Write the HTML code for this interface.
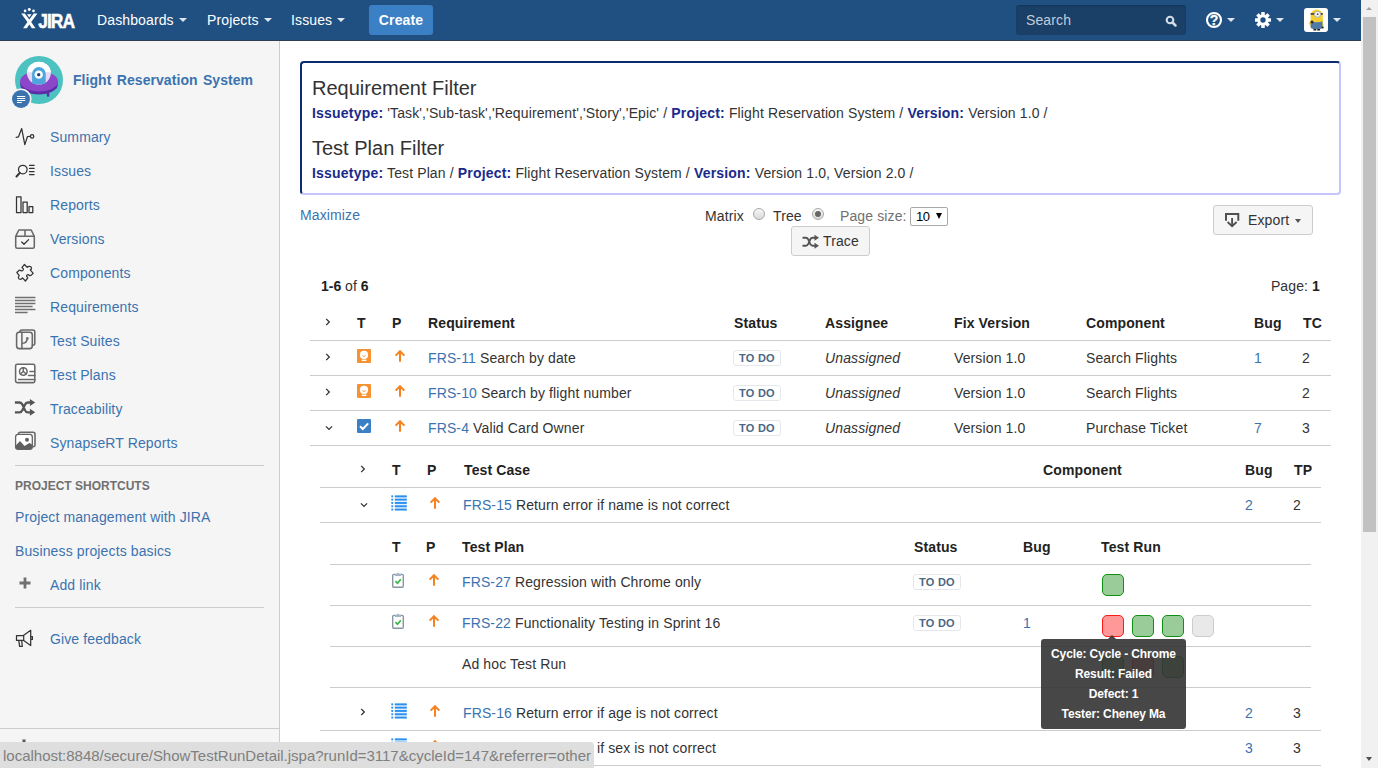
<!DOCTYPE html>
<html lang="en">
<head>
<meta charset="utf-8">
<title>Traceability - Flight Reservation System - JIRA</title>
<style>
*{box-sizing:border-box;margin:0;padding:0}
html,body{width:1378px;height:768px;overflow:hidden;background:#fff}
body{font-family:"Liberation Sans",Arial,sans-serif;font-size:14px;color:#333;line-height:20px;position:relative;letter-spacing:0.12px}
a{color:#3b73af;text-decoration:none}
.abs{position:absolute}
/* header */
#header{position:absolute;left:0;top:0;width:1361px;height:41px;background:#205081;border-bottom:1px solid #2e3d54}
#header .nav{position:absolute;top:0;height:40px;line-height:40px;color:#fff;font-size:14px;white-space:nowrap}
#header .caret{display:inline-block;width:0;height:0;border-left:4px solid transparent;border-right:4px solid transparent;border-top:4px solid #dfe6ee;vertical-align:middle;margin-left:5px;position:relative;top:-1px}
#header .hc{position:absolute;top:18px;width:0;height:0;border-left:4px solid transparent;border-right:4px solid transparent;border-top:4px solid #dfe6ee}
#create{position:absolute;left:369px;top:5px;width:64px;height:30px;border-radius:3px;background:#3b7fc4;color:#fff;font-weight:bold;font-size:14px;line-height:30px;text-align:center}
#search{position:absolute;left:1016px;top:5px;width:170px;height:30px;border-radius:3px;background:#1a4068;color:#c0cddb;font-size:14px;line-height:31px;padding-left:10px;box-shadow:inset 0 1px 2px rgba(0,0,0,.18)}
/* sidebar */
#sidebar{position:absolute;left:0;top:41px;width:280px;height:727px;background:#f5f5f5;border-right:1px solid #ccc}
#sidebar .item{position:absolute;left:50px;height:20px;line-height:20px;font-size:14px;color:#3b73af;white-space:nowrap}
#sidebar .ico{position:absolute;left:13px;width:24px;height:24px}
#sidebar .hr{position:absolute;left:15px;width:249px;height:1px;background:#ccc}
/* scrollbar */
#sb{position:absolute;left:1361px;top:0;width:17px;height:768px;background:#f1f1f1}
#sb .thumb{position:absolute;left:2px;top:17px;width:13px;height:515px;background:#c1c1c1}
#sb .up{position:absolute;left:5px;top:7px;width:0;height:0;border-left:3.5px solid transparent;border-right:3.5px solid transparent;border-bottom:3.5px solid #a3a3a3}
#sb .down{position:absolute;left:5px;top:757px;width:0;height:0;border-left:3.5px solid transparent;border-right:3.5px solid transparent;border-top:4px solid #505050}
/* content */
#filter{position:absolute;left:300px;top:61px;width:1041px;height:134px;border:2px solid;border-color:#0b2b70 #c5c5fb #c5c5fb #0b2b70;border-radius:4px}
#filter h2{letter-spacing:0;position:absolute;left:10px;font-size:20px;font-weight:normal;line-height:24px;color:#333;white-space:nowrap}
#filter p{position:absolute;left:10px;font-size:14px;line-height:20px;white-space:nowrap;color:#333}
#filter b{color:#1a2a8c;letter-spacing:0.2px}
.btn{position:absolute;border:1px solid #ccc;border-radius:3px;background:#f5f5f5;color:#333;font-size:14px;white-space:nowrap}
.t{position:absolute;white-space:nowrap;line-height:20px;height:20px}
.b{font-weight:bold;color:#222}
.line{position:absolute;height:1px;background:#ccc}
.lz{display:inline-block;position:relative;top:-1px;left:-1px;border:1px solid #e4e8ed;border-radius:3px;background:#fff;color:#4a6785;font-size:11px;font-weight:bold;line-height:14px;padding:0 5px 0 5px;letter-spacing:0.25px;height:16px}
.run{position:absolute;width:22px;height:22px;border-radius:5px;border:1px solid}
.g{background:#99cc99;border-color:#0f8f14}
.r{background:#ff9999;border-color:#ff1a1a}
.n{background:#e9e9e9;border-color:#ccc}
#tip{position:absolute;left:1041px;top:639px;width:145px;height:90px;border-radius:3px;background:rgba(51,51,51,.9);color:#fff;font-size:12px;font-weight:bold;text-align:center;line-height:20px;padding-top:5px;letter-spacing:-0.12px}
#tip:before{content:"";position:absolute;left:67px;top:-4px;border-left:4.5px solid transparent;border-right:4.5px solid transparent;border-bottom:4px solid rgba(51,51,51,.9)}
#main{position:absolute;left:0;top:0;width:1378px;height:768px}
.radio{position:absolute;width:12px;height:12px;border-radius:50%;border:1px solid #a8a8a8;background:linear-gradient(#f6f6f6,#dadada)}
.radio.on:after{content:"";position:absolute;left:2px;top:2px;width:6px;height:6px;border-radius:50%;background:#666}
.sel{position:absolute;width:38px;height:19px;border:1px solid #a9a9a9;border-radius:2px;background:#fff;font-size:13px;line-height:17px;padding-left:5px;color:#000;letter-spacing:-0.5px}
.sel i{position:absolute;right:5px;top:5px;border-left:3.5px solid transparent;border-right:3.5px solid transparent;border-top:6px solid #000}
.dcaret{position:absolute;width:0;height:0;border-left:3.5px solid transparent;border-right:3.5px solid transparent;border-top:4px solid #555}
#status{position:absolute;left:0;top:742px;width:594px;height:26px;background:#dedede;border-top-right-radius:4px;color:#808080;font-size:15px;line-height:26px;padding:1px 0 0 3px;white-space:nowrap;font-family:"Liberation Sans",sans-serif;letter-spacing:-0.01px}
</style>
</head>
<body>

<div id="header">
  <div class="nav" style="left:97px">Dashboards<span class="caret"></span></div>
  <div class="nav" style="left:207px">Projects<span class="caret"></span></div>
  <div class="nav" style="left:291px">Issues<span class="caret"></span></div>
  <div id="create">Create</div>
  <div id="search">Search</div>

  <svg class="abs" style="left:20px;top:6px" width="58" height="26" viewBox="0 0 58 26">
    <circle cx="5.1" cy="4.9" r="1.35" fill="#fff"/><circle cx="9.3" cy="3.5" r="1.45" fill="#fff"/><circle cx="13.5" cy="4.9" r="1.35" fill="#fff"/>
    <path d="M1.2 7.4h3.6l4.5 6.2 4.5-6.2h3.6L11.2 16l4.3 6.2h-3.7l-2.5-3.7-2.5 3.7H3.1L7.4 16z" fill="#fff"/>
    <path d="M7 8.3h4.6L9.3 11.6z" fill="#fff"/>
    <text x="0" y="22.1" transform="translate(18.2 0) scale(0.87 1)" font-family="Liberation Sans, Arial, sans-serif" font-weight="bold" font-size="20" fill="#fff" stroke="#fff" stroke-width="0.5" letter-spacing="-1.1">JIRA</text>
  </svg>
  <svg class="abs" style="left:1165px;top:15px" width="13" height="13" viewBox="0 0 13 13"><circle cx="5" cy="5" r="3.3" fill="none" stroke="#d3dce6" stroke-width="2.1"/><path d="M7.5 7.5l3 3" stroke="#d3dce6" stroke-width="2.5" stroke-linecap="round"/></svg>
  <svg class="abs" style="left:1205px;top:11px" width="18" height="18" viewBox="0 0 18 18"><circle cx="9" cy="9" r="7" fill="none" stroke="#fff" stroke-width="2.100"/><text x="9" y="13.9" text-anchor="middle" font-family="Liberation Sans, Arial, sans-serif" font-weight="bold" font-size="14" fill="#fff" stroke="#fff" stroke-width="0.300">?</text></svg>
  <i class="hc" style="left:1227.300px"></i>
  <svg class="abs" style="left:1254px;top:11px" width="18" height="18" viewBox="-9.700 -9.700 19.400 19.400"><g fill="#fff"><circle r="6.1"/><rect x="-1.9" y="-8.6" width="3.8" height="17.2" rx="0.6"/><rect x="-1.9" y="-8.6" width="3.8" height="17.2" rx="0.6" transform="rotate(45)"/><rect x="-1.9" y="-8.6" width="3.8" height="17.2" rx="0.6" transform="rotate(90)"/><rect x="-1.9" y="-8.6" width="3.8" height="17.2" rx="0.6" transform="rotate(135)"/></g><circle r="2.9" fill="#205081"/></svg>
  <i class="hc" style="left:1276.300px"></i>
  <svg class="abs" style="left:1304px;top:8px" width="24" height="24" viewBox="0 0 24 24"><rect width="24" height="24" rx="3" fill="#fff"/><path d="M6.600 7.500a6.100 6.100 0 0 1 12.200 0V18a3 3 0 0 1-3 3h-6.200a3 3 0 0 1-3-3z" fill="#f6cf2f"/><path d="M6.500 13.400q6.200 1.500 12.200 0V18a3 3 0 0 1-3 3H9.500a3 3 0 0 1-3-3z" fill="#5079a5"/><path d="M7 12.600l-2.300 2.800 1.200 1.600 1.500-1.300zM18.400 13l1.200 4.500-1 .3z" fill="#f2c62a"/><circle cx="8" cy="14" r="1.500" fill="#2a2a2a"/><circle cx="18.700" cy="19.500" r="1.100" fill="#2a2a2a"/><rect x="6.600" y="5.200" width="12.200" height="1.500" fill="#333"/><circle cx="13.500" cy="6.300" r="3.400" fill="#b5b8bc"/><circle cx="13.500" cy="6.300" r="2.400" fill="#fff"/><circle cx="13.600" cy="6.200" r="0.900" fill="#6b2f2a"/><path d="M9.700 21h2.600v1.600H9.300zM13.200 21h2.600l.4 1.600h-3z" fill="#1d1d1d"/></svg>
  <i class="hc" style="left:1333px"></i>
</div>

<div id="sidebar">

  <!-- project avatar -->
  <svg class="abs" style="left:8px;top:9px" width="64" height="64" viewBox="0 0 64 64">
    <circle cx="31" cy="30" r="24" fill="#4cc3c1"/>
    <ellipse cx="31" cy="34.400" rx="18.800" ry="10.100" fill="#5a2ea6"/>
    <rect x="38.800" y="41" width="2.500" height="5.700" rx="1" fill="#5a2ea6"/>
    <ellipse cx="31" cy="31.300" rx="19" ry="10.100" fill="#8b46c9"/>
    <ellipse cx="30.900" cy="23.100" rx="12" ry="11.400" fill="#e6d9f5"/>
    <path d="M18.930 22.300A12 11.400 0 0 1 42.870 22.300z" fill="#fff"/>
    <path d="M24.100 33.600V23.700a6.800 6.800 0 0 1 13.600 0v9.900q-6.800 2-13.600 0z" fill="#4ea6dc"/>
    <circle cx="30.700" cy="24.650" r="4.200" fill="#fff"/><circle cx="30.700" cy="24.650" r="1.700" fill="#1d3f7a"/>
    <circle cx="13" cy="49" r="10.600" fill="#f5f5f5"/><circle cx="13" cy="49" r="9" fill="#3b73af"/>
    <path d="M9 46.500h8.200M9 48.500h8.200M9 50.500h8.200M9 52.500h4.800" stroke="#fff" stroke-width="1.100"/>
  </svg>
  <!-- summary -->
  <svg class="ico" style="top:84px" viewBox="0 0 24 24"><path d="M3.200 12.300l2.300-.5L8.700 3.600l3.100 16 2.700-8.100 2.600-.1" fill="none" stroke="#333" stroke-width="1.25" stroke-linejoin="round" stroke-linecap="round"/><circle cx="19.100" cy="11.400" r="1.700" fill="none" stroke="#333" stroke-width="1.25" stroke-linejoin="round" stroke-linecap="round"/></svg>
  <!-- issues -->
  <svg class="ico" style="top:118px" viewBox="0 0 24 24"><circle cx="9.800" cy="10.600" r="4.300" fill="none" stroke="#333" stroke-width="1.25" stroke-linejoin="round" stroke-linecap="round"/><path d="M6.800 13.900l-3.300 3.600" fill="none" stroke="#333" stroke-width="2" stroke-linecap="round"/><path d="M16.500 6.400h4.600M16.500 9.400h4.600M16.500 12.500h4.600M16.500 15.500h4.600" fill="none" stroke="#333" stroke-width="1.25" stroke-linejoin="round" stroke-linecap="round"/></svg>
  <!-- reports -->
  <svg class="ico" style="top:152px" viewBox="0 0 24 24"><rect x="3.500" y="3.800" width="4.500" height="15.700" fill="none" stroke="#333" stroke-width="1.25" stroke-linejoin="round" stroke-linecap="round"/><rect x="10" y="9" width="4.200" height="10.500" fill="none" stroke="#333" stroke-width="1.25" stroke-linejoin="round" stroke-linecap="round"/><rect x="16" y="13.600" width="3.800" height="5.900" fill="none" stroke="#333" stroke-width="1.25" stroke-linejoin="round" stroke-linecap="round"/></svg>
  <!-- versions -->
  <svg class="ico" style="top:186px" viewBox="0 0 24 24"><path d="M2.700 9.300L5.800 3h12.400l3.100 6.300v10.400a1.500 1.500 0 0 1-1.500 1.500H4.200a1.500 1.500 0 0 1-1.500-1.500zM2.700 9.300h18.600M12 3v6.300" fill="none" stroke="#686868" stroke-width="1.55" stroke-linejoin="round" stroke-linecap="round"/><path d="M8.700 15l2.300 2.300 4.600-4.700" fill="none" stroke="#333" stroke-width="1.25" stroke-linejoin="round" stroke-linecap="round"/></svg>
  <!-- components -->
  <svg class="abs" style="left:10px;top:217px" width="30" height="30" viewBox="0 0 30 30"><path d="M14.450 6.450L17.200 9.400Q18 8.300 19.500 8.400Q21.200 8.500 21.500 10Q21.700 11.200 20.300 11.900L23.200 15.400L21.100 17.200Q20.500 18 19.500 17.600Q18.500 16.200 17.300 16.800Q16.200 17.600 16.700 18.600Q17.600 19.300 17.800 19.900L15.400 23L12.500 19.900Q11.600 21.400 10.200 21.300Q8.600 21.300 8.400 20Q8.200 18.700 9.200 17.600L6.800 14.450L9.200 12.300Q10 11.800 11 12.700Q12.200 13.200 13.100 12.100Q13.800 11 12.900 10.200Q11.800 9.700 12.100 9.300z" fill="none" stroke="#333" stroke-width="1.25" stroke-linejoin="round" stroke-linecap="round"/></svg>
  <!-- requirements -->
  <svg class="abs" style="left:10px;top:251px" width="30" height="24" viewBox="0 0 30 24"><path d="M5 5.500h20.400M5 8.500h20.400M5 11.500h20.400M5 14.500h17.600M5 17.500h20.400M5 20.500h12.600" fill="none" stroke="#707070" stroke-width="1.450"/></svg>
  <!-- test suites -->
  <svg class="abs" style="left:10px;top:283px" width="30" height="30" viewBox="0 0 30 30"><path d="M9.800 8.200V8a2 2 0 0 1 2-2h11a2 2 0 0 1 2 2v11.300a2 2 0 0 1-2 2h-.5" fill="none" stroke="#686868" stroke-width="1.55" stroke-linejoin="round" stroke-linecap="round"/><rect x="6.600" y="8.200" width="15.700" height="16.400" rx="2.600" fill="none" stroke="#686868" stroke-width="1.55" stroke-linejoin="round" stroke-linecap="round"/><path d="M11.900 8.200v16.400M11.900 19.300q4.600 0 5.200-4" fill="none" stroke="#686868" stroke-width="1.55" stroke-linejoin="round" stroke-linecap="round"/><circle cx="17.300" cy="14.500" r="1.400" fill="#707070"/></svg>
  <!-- test plans -->
  <svg class="abs" style="left:10px;top:317px" width="30" height="30" viewBox="0 0 30 30"><rect x="5.600" y="6.300" width="19.200" height="18.300" rx="1.600" fill="#fff" stroke="#686868" stroke-width="1.550"/><circle cx="13.300" cy="13.500" r="3.800" fill="none" stroke="#686868" stroke-width="1.55" stroke-linejoin="round" stroke-linecap="round"/><path d="M13.300 13.500V9.700M13.300 13.500l-3 2.500M13.300 13.500l3 2.500M20 13.500h4.800M18.500 17.400h6.300M8.600 21.400h16.200" fill="none" stroke="#686868" stroke-width="1.55" stroke-linejoin="round" stroke-linecap="round"/></svg>
  <!-- traceability -->
  <svg class="abs" style="left:10px;top:351px" width="30" height="30" viewBox="0 0 30 30"><path d="M4.900 10.500h4.600q2 0 3 2.200l2.400 5.400q1 2.200 3 2.200h3M4.900 20.300h4.600q2 0 3-2.200l2.400-5.400q1-2.200 3-2.200h3" fill="none" stroke="#555" stroke-width="2.300"/><path d="M19.900 7l5.300 3.500-5.300 3.500zM19.900 16.800l5.300 3.500-5.300 3.500z" fill="#555"/></svg>
  <!-- synapseRT reports -->
  <svg class="abs" style="left:10px;top:385px" width="30" height="30" viewBox="0 0 30 30"><path d="M8.400 8.400V8.200a2 2 0 0 1 2-2H23a2 2 0 0 1 2 2v10.500a2 2 0 0 1-2 2h-.7" fill="none" stroke="#686868" stroke-width="1.55" stroke-linejoin="round" stroke-linecap="round"/><rect x="5.600" y="8.400" width="16.700" height="15" rx="2.600" fill="#fff" stroke="#666" stroke-width="1.300"/><path d="M5.800 19.500L10 15l4.500 5 5-3 2.600 1.500v2.300a2.600 2.600 0 0 1-2.600 2.600H8.200a2.600 2.600 0 0 1-2.600-2.600z" fill="#606060"/><circle cx="17" cy="13.700" r="2" fill="#606060"/></svg>
  <!-- add link -->
  <svg class="abs" style="left:19px;top:536px" width="12" height="12" viewBox="0 0 12 12"><path d="M6 .5v11M.5 6h11" stroke="#707070" stroke-width="2.800"/></svg>
  <!-- feedback -->
  <svg class="abs" style="left:10px;top:583px" width="30" height="30" viewBox="0 0 30 30"><path d="M6.500 11.500h7.200v4.900H6.500zM13.700 11.300l7-5v15.200l-7-5M8.800 16.400l.8 6h2.700l-.6-6M20.700 12.500h1.700v2.900h-1.700" fill="none" stroke="#333" stroke-width="1.25" stroke-linejoin="round" stroke-linecap="round"/></svg>
  <div class="item" style="left:73px;top:29px;font-weight:bold;letter-spacing:0.06px;word-spacing:1.4px">Flight Reservation System</div>
  <div class="item" style="top:86px">Summary</div>
  <div class="item" style="top:120px">Issues</div>
  <div class="item" style="top:154px">Reports</div>
  <div class="item" style="top:188px">Versions</div>
  <div class="item" style="top:222px">Components</div>
  <div class="item" style="top:256px">Requirements</div>
  <div class="item" style="top:290px">Test Suites</div>
  <div class="item" style="top:324px">Test Plans</div>
  <div class="item" style="top:358px">Traceability</div>
  <div class="item" style="top:392px">SynapseRT Reports</div>
  <div class="hr" style="top:424px"></div>
  <div class="item" style="left:15px;top:435px;font-size:12px;font-weight:bold;color:#707070;letter-spacing:0">PROJECT SHORTCUTS</div>
  <div class="item" style="left:15px;top:466px">Project management with JIRA</div>
  <div class="item" style="left:15px;top:500px">Business projects basics</div>
  <div class="item" style="top:534px">Add link</div>
  <div class="hr" style="top:566px"></div>
  <div class="item" style="top:588px">Give feedback</div>
  <div class="hr" style="left:0;width:279px;top:687px"></div>
  <svg class="abs" style="left:16px;top:698px" width="16" height="16" viewBox="-8 -8 16 16"><g fill="#555"><circle r="5"/><rect x="-1.500" y="-7.500" width="3" height="15"/><rect x="-1.500" y="-7.500" width="3" height="15" transform="rotate(60)"/><rect x="-1.500" y="-7.500" width="3" height="15" transform="rotate(120)"/></g><circle r="2.200" fill="#f5f5f5"/></svg>
</div>

<div id="filter">
  <h2 style="top:13px">Requirement Filter</h2>
  <p style="top:40px"><b>Issuetype:</b> 'Task','Sub-task','Requirement','Story','Epic' / <b>Project:</b> Flight Reservation System / <b>Version:</b> Version 1.0 /</p>
  <h2 style="top:73px">Test Plan Filter</h2>
  <p style="top:100px"><b>Issuetype:</b> Test Plan / <b>Project:</b> Flight Reservation System / <b>Version:</b> Version 1.0, Version 2.0 /</p>
</div>

<div id="main">
  <a class="t" style="left:300px;top:205px">Maximize</a>
  <span class="t" style="left:705px;top:206px">Matrix</span>
  <span class="radio" style="left:753px;top:208px"></span>
  <span class="t" style="left:773px;top:206px">Tree</span>
  <span class="radio on" style="left:812px;top:208px"></span>
  <span class="t" style="left:840px;top:206px;color:#707070">Page size:</span>
  <span class="sel" style="left:910px;top:207px">10<i></i></span>
  <div class="btn" style="left:1213px;top:205px;width:100px;height:30px"><svg class="abs" style="left:4px;top:0px" width="30" height="30" viewBox="0 0 30 30"><path d="M8 14.800V8h12.300v6.800" fill="none" stroke="#505050" stroke-width="2"/><path d="M14.100 12.100v7.600M9.600 16l4.500 4.300 4.500-4.300" fill="none" stroke="#505050" stroke-width="1.900"/></svg><span class="t" style="left:34px;top:4px">Export</span><i class="dcaret" style="left:81px;top:13px"></i></div>
  <div class="btn" style="left:791px;top:226px;width:79px;height:30px"><svg class="abs" style="left:9px;top:6px" width="20" height="18" viewBox="0 0 20 18"><path d="M1.500 4.700h3.300q1.600 0 2.500 1.800l1.900 4.400q.9 1.800 2.500 1.800h2.500M1.500 12.700h3.300q1.600 0 2.500-1.800l1.900-4.400q.9-1.800 2.500-1.800h2.500" fill="none" stroke="#555" stroke-width="1.900"/><path d="M13.500 1.700l4.500 3-4.500 3zM13.500 9.700l4.500 3-4.500 3z" fill="#555"/></svg><span class="t" style="left:31px;top:4px">Trace</span></div>

  <span class="t" style="left:321px;top:276px;letter-spacing:0"><b class="b">1-6</b> of <b class="b">6</b></span>
  <span class="t" style="right:58px;top:276px">Page: <b class="b">1</b></span>


  <!-- icons -->
  <svg class="abs" style="left:324px;top:316.5px" width="8" height="10" viewBox="0 0 8 10" ><path d="M2.2 1.9L5.3 5 2.2 8.1" fill="none" stroke="#333" stroke-width="1.3"/></svg><svg class="abs" style="left:324px;top:351.5px" width="8" height="10" viewBox="0 0 8 10" ><path d="M2.2 1.9L5.3 5 2.2 8.1" fill="none" stroke="#333" stroke-width="1.3"/></svg><svg class="abs" style="left:324px;top:386.5px" width="8" height="10" viewBox="0 0 8 10" ><path d="M2.2 1.9L5.3 5 2.2 8.1" fill="none" stroke="#333" stroke-width="1.3"/></svg><svg class="abs" style="left:323.5px;top:424px" width="10" height="8" viewBox="0 0 10 8" ><path d="M1.9 2.4L5 5.4 8.1 2.4" fill="none" stroke="#333" stroke-width="1.3"/></svg>
  <svg class="abs" style="left:357px;top:349px" width="14" height="14" viewBox="0 0 14 14" ><rect width="14" height="14" rx="1" fill="#f79232"/><circle cx="7" cy="5.9" r="4.1" fill="#fff"/><rect x="4.8" y="10.6" width="4.6" height="1.4" fill="#fff"/><path d="M5.3 6.6q1.7 1.9 3.4 0" fill="none" stroke="#f79232" stroke-width="0.9"/></svg><svg class="abs" style="left:357px;top:384px" width="14" height="14" viewBox="0 0 14 14" ><rect width="14" height="14" rx="1" fill="#f79232"/><circle cx="7" cy="5.9" r="4.1" fill="#fff"/><rect x="4.8" y="10.6" width="4.6" height="1.4" fill="#fff"/><path d="M5.3 6.6q1.7 1.9 3.4 0" fill="none" stroke="#f79232" stroke-width="0.9"/></svg><svg class="abs" style="left:357px;top:419px" width="14" height="14" viewBox="0 0 14 14" ><rect width="14" height="14" rx="1" fill="#3b7fc4"/><path d="M3 7.2l2.8 2.8 5.4-5.6" fill="none" stroke="#fff" stroke-width="2"/></svg>
  <svg class="abs" style="left:394px;top:350px" width="12" height="13" viewBox="0 0 12 13" ><path d="M6 11.7V1.3M1.6 5.6L6 1.2l4.4 4.4" fill="none" stroke="#f5821f" stroke-width="2" stroke-linecap="butt" stroke-linejoin="miter"/></svg><svg class="abs" style="left:394px;top:385px" width="12" height="13" viewBox="0 0 12 13" ><path d="M6 11.7V1.3M1.6 5.6L6 1.2l4.4 4.4" fill="none" stroke="#f5821f" stroke-width="2" stroke-linecap="butt" stroke-linejoin="miter"/></svg><svg class="abs" style="left:394px;top:420px" width="12" height="13" viewBox="0 0 12 13" ><path d="M6 11.7V1.3M1.6 5.6L6 1.2l4.4 4.4" fill="none" stroke="#f5821f" stroke-width="2" stroke-linecap="butt" stroke-linejoin="miter"/></svg>
  <svg class="abs" style="left:359px;top:463.5px" width="8" height="10" viewBox="0 0 8 10" ><path d="M2.2 1.9L5.3 5 2.2 8.1" fill="none" stroke="#333" stroke-width="1.3"/></svg><svg class="abs" style="left:358.5px;top:501px" width="10" height="8" viewBox="0 0 10 8" ><path d="M1.9 2.4L5 5.4 8.1 2.4" fill="none" stroke="#333" stroke-width="1.3"/></svg><svg class="abs" style="left:359px;top:706.5px" width="8" height="10" viewBox="0 0 8 10" ><path d="M2.2 1.9L5.3 5 2.2 8.1" fill="none" stroke="#333" stroke-width="1.3"/></svg>
  <svg class="abs" style="left:391px;top:495px" width="16" height="16" viewBox="0 0 16 16" ><rect x="3.8" y="0.4" width="12" height="15.1" fill="#e3f0fd"/><rect x="0.3" y="0.4" width="1.9" height="1.9" fill="#2a8ff0"/><rect x="3.8" y="0.4" width="12" height="1.9" fill="#2a8ff0"/><rect x="0.3" y="3.7" width="1.9" height="1.9" fill="#2a8ff0"/><rect x="3.8" y="3.7" width="12" height="1.9" fill="#2a8ff0"/><rect x="0.3" y="7.0" width="1.9" height="1.9" fill="#2a8ff0"/><rect x="3.8" y="7.0" width="12" height="1.9" fill="#2a8ff0"/><rect x="0.3" y="10.3" width="1.9" height="1.9" fill="#2a8ff0"/><rect x="3.8" y="10.3" width="12" height="1.9" fill="#2a8ff0"/><rect x="0.3" y="13.6" width="1.9" height="1.9" fill="#2a8ff0"/><rect x="3.8" y="13.6" width="12" height="1.9" fill="#2a8ff0"/></svg><svg class="abs" style="left:391px;top:703px" width="16" height="16" viewBox="0 0 16 16" ><rect x="3.8" y="0.4" width="12" height="15.1" fill="#e3f0fd"/><rect x="0.3" y="0.4" width="1.9" height="1.9" fill="#2a8ff0"/><rect x="3.8" y="0.4" width="12" height="1.9" fill="#2a8ff0"/><rect x="0.3" y="3.7" width="1.9" height="1.9" fill="#2a8ff0"/><rect x="3.8" y="3.7" width="12" height="1.9" fill="#2a8ff0"/><rect x="0.3" y="7.0" width="1.9" height="1.9" fill="#2a8ff0"/><rect x="3.8" y="7.0" width="12" height="1.9" fill="#2a8ff0"/><rect x="0.3" y="10.3" width="1.9" height="1.9" fill="#2a8ff0"/><rect x="3.8" y="10.3" width="12" height="1.9" fill="#2a8ff0"/><rect x="0.3" y="13.6" width="1.9" height="1.9" fill="#2a8ff0"/><rect x="3.8" y="13.6" width="12" height="1.9" fill="#2a8ff0"/></svg><svg class="abs" style="left:391px;top:738px" width="16" height="16" viewBox="0 0 16 16" ><rect x="3.8" y="0.4" width="12" height="15.1" fill="#e3f0fd"/><rect x="0.3" y="0.4" width="1.9" height="1.9" fill="#2a8ff0"/><rect x="3.8" y="0.4" width="12" height="1.9" fill="#2a8ff0"/><rect x="0.3" y="3.7" width="1.9" height="1.9" fill="#2a8ff0"/><rect x="3.8" y="3.7" width="12" height="1.9" fill="#2a8ff0"/><rect x="0.3" y="7.0" width="1.9" height="1.9" fill="#2a8ff0"/><rect x="3.8" y="7.0" width="12" height="1.9" fill="#2a8ff0"/><rect x="0.3" y="10.3" width="1.9" height="1.9" fill="#2a8ff0"/><rect x="3.8" y="10.3" width="12" height="1.9" fill="#2a8ff0"/><rect x="0.3" y="13.6" width="1.9" height="1.9" fill="#2a8ff0"/><rect x="3.8" y="13.6" width="12" height="1.9" fill="#2a8ff0"/></svg>
  <svg class="abs" style="left:429px;top:497px" width="12" height="13" viewBox="0 0 12 13" ><path d="M6 11.7V1.3M1.6 5.6L6 1.2l4.4 4.4" fill="none" stroke="#f5821f" stroke-width="2" stroke-linecap="butt" stroke-linejoin="miter"/></svg><svg class="abs" style="left:429px;top:705px" width="12" height="13" viewBox="0 0 12 13" ><path d="M6 11.7V1.3M1.6 5.6L6 1.2l4.4 4.4" fill="none" stroke="#f5821f" stroke-width="2" stroke-linecap="butt" stroke-linejoin="miter"/></svg><svg class="abs" style="left:429px;top:740px" width="12" height="13" viewBox="0 0 12 13" ><path d="M6 11.7V1.3M1.6 5.6L6 1.2l4.4 4.4" fill="none" stroke="#f5821f" stroke-width="2" stroke-linecap="butt" stroke-linejoin="miter"/></svg>
  <svg class="abs" style="left:392px;top:572px" width="12" height="16" viewBox="0 0 12 16" ><rect x="0.7" y="2.4" width="10.6" height="12.9" rx="1.2" fill="#fff" stroke="#8796a4" stroke-width="1.4"/><path d="M2.9 4V1.9h1.9L6 0.3l1.2 1.6h1.9V4z" fill="#a3b4c4"/><path d="M3.4 9.2l2.1 2 3.3-3.9" fill="none" stroke="#3cb54a" stroke-width="1.7"/></svg><svg class="abs" style="left:392px;top:613px" width="12" height="16" viewBox="0 0 12 16" ><rect x="0.7" y="2.4" width="10.6" height="12.9" rx="1.2" fill="#fff" stroke="#8796a4" stroke-width="1.4"/><path d="M2.9 4V1.9h1.9L6 0.3l1.2 1.6h1.9V4z" fill="#a3b4c4"/><path d="M3.4 9.2l2.1 2 3.3-3.9" fill="none" stroke="#3cb54a" stroke-width="1.7"/></svg>
  <svg class="abs" style="left:428px;top:574px" width="12" height="13" viewBox="0 0 12 13" ><path d="M6 11.7V1.3M1.6 5.6L6 1.2l4.4 4.4" fill="none" stroke="#f5821f" stroke-width="2" stroke-linecap="butt" stroke-linejoin="miter"/></svg><svg class="abs" style="left:428px;top:615px" width="12" height="13" viewBox="0 0 12 13" ><path d="M6 11.7V1.3M1.6 5.6L6 1.2l4.4 4.4" fill="none" stroke="#f5821f" stroke-width="2" stroke-linecap="butt" stroke-linejoin="miter"/></svg>
  <!-- table 1 -->
  <span class="t b" style="left:357px;top:313px">T</span>
  <span class="t b" style="left:392px;top:313px">P</span>
  <span class="t b" style="left:428px;top:313px">Requirement</span>
  <span class="t b" style="left:734px;top:313px">Status</span>
  <span class="t b" style="left:825px;top:313px">Assignee</span>
  <span class="t b" style="left:954px;top:313px">Fix Version</span>
  <span class="t b" style="left:1086px;top:313px">Component</span>
  <span class="t b" style="left:1254px;top:313px">Bug</span>
  <span class="t b" style="left:1303px;top:313px">TC</span>
  <div class="line" style="left:310px;width:1021px;top:340px"></div>

  <span class="t" style="left:428px;top:348px"><a>FRS-11</a> Search by date</span>
  <span class="t" style="left:734px;top:348px"><span class="lz">TO DO</span></span>
  <span class="t" style="left:825px;top:348px"><i>Unassigned</i></span>
  <span class="t" style="left:954px;top:348px">Version 1.0</span>
  <span class="t" style="left:1086px;top:348px">Search Flights</span>
  <a class="t" style="left:1254px;top:348px">1</a>
  <span class="t" style="left:1302px;top:348px">2</span>
  <div class="line" style="left:310px;width:1021px;top:375px"></div>

  <span class="t" style="left:428px;top:383px"><a>FRS-10</a> Search by flight number</span>
  <span class="t" style="left:734px;top:383px"><span class="lz">TO DO</span></span>
  <span class="t" style="left:825px;top:383px"><i>Unassigned</i></span>
  <span class="t" style="left:954px;top:383px">Version 1.0</span>
  <span class="t" style="left:1086px;top:383px">Search Flights</span>
  <span class="t" style="left:1302px;top:383px">2</span>
  <div class="line" style="left:310px;width:1021px;top:410px"></div>

  <span class="t" style="left:428px;top:418px"><a>FRS-4</a> Valid Card Owner</span>
  <span class="t" style="left:734px;top:418px"><span class="lz">TO DO</span></span>
  <span class="t" style="left:825px;top:418px"><i>Unassigned</i></span>
  <span class="t" style="left:954px;top:418px">Version 1.0</span>
  <span class="t" style="left:1086px;top:418px">Purchase Ticket</span>
  <a class="t" style="left:1254px;top:418px">7</a>
  <span class="t" style="left:1302px;top:418px">3</span>
  <div class="line" style="left:310px;width:1021px;top:445px"></div>

  <!-- table 2 -->
  <span class="t b" style="left:392px;top:460px">T</span>
  <span class="t b" style="left:427px;top:460px">P</span>
  <span class="t b" style="left:464px;top:460px">Test Case</span>
  <span class="t b" style="left:1043px;top:460px">Component</span>
  <span class="t b" style="left:1245px;top:460px">Bug</span>
  <span class="t b" style="left:1294px;top:460px">TP</span>
  <div class="line" style="left:320px;width:1001px;top:487px"></div>

  <span class="t" style="left:463px;top:495px"><a>FRS-15</a> Return error if name is not correct</span>
  <a class="t" style="left:1245px;top:495px">2</a>
  <span class="t" style="left:1293px;top:495px">2</span>
  <div class="line" style="left:320px;width:1001px;top:522px"></div>

  <!-- table 3 -->
  <span class="t b" style="left:392px;top:537px">T</span>
  <span class="t b" style="left:426px;top:537px">P</span>
  <span class="t b" style="left:462px;top:537px">Test Plan</span>
  <span class="t b" style="left:914px;top:537px">Status</span>
  <span class="t b" style="left:1023px;top:537px">Bug</span>
  <span class="t b" style="left:1101px;top:537px">Test Run</span>
  <div class="line" style="left:330px;width:981px;top:564px"></div>

  <span class="t" style="left:462px;top:572px"><a>FRS-27</a> Regression with Chrome only</span>
  <span class="t" style="left:914px;top:572px"><span class="lz">TO DO</span></span>
  <span class="run g" style="left:1102px;top:574px"></span>
  <div class="line" style="left:330px;width:981px;top:605px"></div>

  <span class="t" style="left:462px;top:613px"><a>FRS-22</a> Functionality Testing in Sprint 16</span>
  <span class="t" style="left:914px;top:613px"><span class="lz">TO DO</span></span>
  <a class="t" style="left:1023px;top:613px">1</a>
  <span class="run r" style="left:1102px;top:615px"></span>
  <span class="run g" style="left:1132px;top:615px"></span>
  <span class="run g" style="left:1162px;top:615px"></span>
  <span class="run n" style="left:1192px;top:615px"></span>
  <div class="line" style="left:330px;width:981px;top:646px"></div>

  <span class="t" style="left:462px;top:654px">Ad hoc Test Run</span>
  <span class="run g" style="left:1102px;top:656px"></span>
  <span class="run r" style="left:1132px;top:656px"></span>
  <span class="run g" style="left:1162px;top:656px"></span>
  <div class="line" style="left:330px;width:981px;top:687px"></div>

  <!-- table 2 cont. -->
  <span class="t" style="left:463px;top:703px"><a>FRS-16</a> Return error if age is not correct</span>
  <a class="t" style="left:1245px;top:703px">2</a>
  <span class="t" style="left:1293px;top:703px">3</span>
  <div class="line" style="left:320px;width:1001px;top:730px"></div>

  <span class="t" style="left:463px;top:738px"><a>FRS-17</a> Return error if sex is not correct</span>
  <a class="t" style="left:1245px;top:738px">3</a>
  <span class="t" style="left:1293px;top:738px">3</span>
  <div class="line" style="left:320px;width:1001px;top:765px"></div>
</div>


<div id="tip">Cycle: Cycle - Chrome<br>Result: Failed<br>Defect: 1<br>Tester: Cheney Ma</div>

<div id="sb"><div class="up"></div><div class="thumb"></div><div class="down"></div></div>
<div id="status">localhost:8848/secure/ShowTestRunDetail.jspa?runId=3117&amp;cycleId=147&amp;referrer=other</div>
</body>
</html>
